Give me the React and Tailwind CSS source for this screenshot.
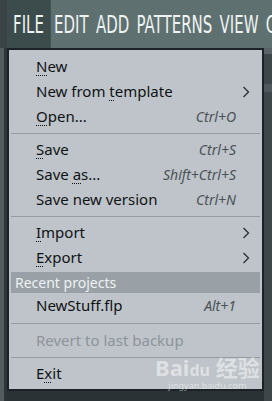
import React from 'react';

const Mn = ({ children }) => (
  <span className="underline decoration-dotted decoration-[1px] underline-offset-[3px]">{children}</span>
);

const Chevron = () => (
  <svg width="8" height="12" viewBox="0 0 8 12" className="text-[#2a2f33]">
    <path d="M1.5 1 L6.5 6 L1.5 11" fill="none" stroke="currentColor" strokeWidth="1.3" />
  </svg>
);

const Item = ({ label, shortcut, sub, disabled }) => (
  <div className="flex h-[25px] items-center pl-[25px] pr-[8px]">
    <span className={`flex-1 whitespace-nowrap text-[15px] ${disabled ? 'text-[#8d949a]' : 'text-[#101315]'}`}>{label}</span>
    {shortcut && <span className="pr-[16px] text-[14px] italic text-[#4b5257]">{shortcut}</span>}
    {sub && <span className="flex w-[12px] justify-center"><Chevron /></span>}
  </div>
);

const Sep = ({ tall }) => (
  <div className={`flex items-center ${tall ? 'h-[10px]' : 'h-[8px]'}`}>
    <div className="h-px w-full bg-[#959ca1]" />
  </div>
);

export default function App() {
  const menus = ['EDIT', 'ADD', 'PATTERNS', 'VIEW', 'OPTIONS'];

  return (
    <div className="relative flex h-[401px] w-[272px] flex-col overflow-hidden bg-[#2b3236]" style={{ fontFamily: '"Noto Sans", "Open Sans", sans-serif' }}>
      {/* Top menu bar */}
      <div className="flex h-[48px] shrink-0 bg-[#5f7070]">
        <div className="h-full w-[7px] shrink-0 bg-[#3a4447]" />
        <div
          className="flex h-full origin-left scale-x-[0.6] items-center text-[25px] leading-none text-[#eef3f3]"
          style={{ fontFamily: '"DejaVu Sans", sans-serif' }}
        >
          <div className="flex h-full items-center bg-[#3c4c4c] pl-[10px] pr-[12px]">FILE</div>
          {menus.map((m, i) => (
            <div key={m} className={`whitespace-nowrap ${i === 0 ? 'ml-[5px]' : 'ml-[12px]'}`}>{m}</div>
          ))}
        </div>
      </div>

      <div className="flex flex-1">
        <div className="flex w-[7px] shrink-0">
          <div className="w-[4px] bg-[#545c60]" />
          <div className="w-[3px] bg-[#2e3538]" />
        </div>

        {/* File menu */}
        <div className="flex h-[343px] w-[257px] shrink-0 flex-col border-2 border-[#1c2226] bg-[#bec4c9] px-[2px] pt-[4px]">
          <Item label={<><Mn>N</Mn>ew</>} />
          <Item label={<>New from <Mn>t</Mn>emplate</>} sub />
          <Item label={<><Mn>O</Mn>pen...</>} shortcut="Ctrl+O" />
          <Sep />
          <Item label={<><Mn>S</Mn>ave</>} shortcut="Ctrl+S" />
          <Item label={<>Save <Mn>a</Mn>s...</>} shortcut="Shift+Ctrl+S" />
          <Item label="Save new version" shortcut="Ctrl+N" />
          <Sep />
          <Item label={<><Mn>I</Mn>mport</>} sub />
          <Item label={<><Mn>E</Mn>xport</>} sub />
          <div className="mt-[2px] flex h-[21px] items-center bg-[#99a1a7] pl-[4px] text-[14px] text-[#eef1f3]">
            Recent projects
          </div>
          <Item label="NewStuff.flp" shortcut="Alt+1" />
          <Sep tall />
          <Item label="Revert to last backup" disabled />
          <Sep />
          <Item label={<>E<Mn>x</Mn>it</>} />
        </div>

        <div className="flex flex-1 flex-col bg-[#3e464a]">
          <div className="h-[6px] bg-[#5a6468]" />
          <div className="mt-[30px] h-[8px] bg-[#4f585c]" />
        </div>
      </div>

      {/* watermark */}
      <div className="pointer-events-none absolute left-[155px] top-[356px] flex flex-col items-center whitespace-nowrap text-white/50">
        <div className="text-[22px] font-bold leading-none" style={{ fontFamily: '"Noto Sans", "Noto Sans CJK SC", sans-serif' }}>
          Bai<span className="text-[16px]">du</span> 经验
        </div>
        <div className="mt-[3px] text-[9px] leading-none">jingyan.baidu.com</div>
      </div>
    </div>
  );
}
